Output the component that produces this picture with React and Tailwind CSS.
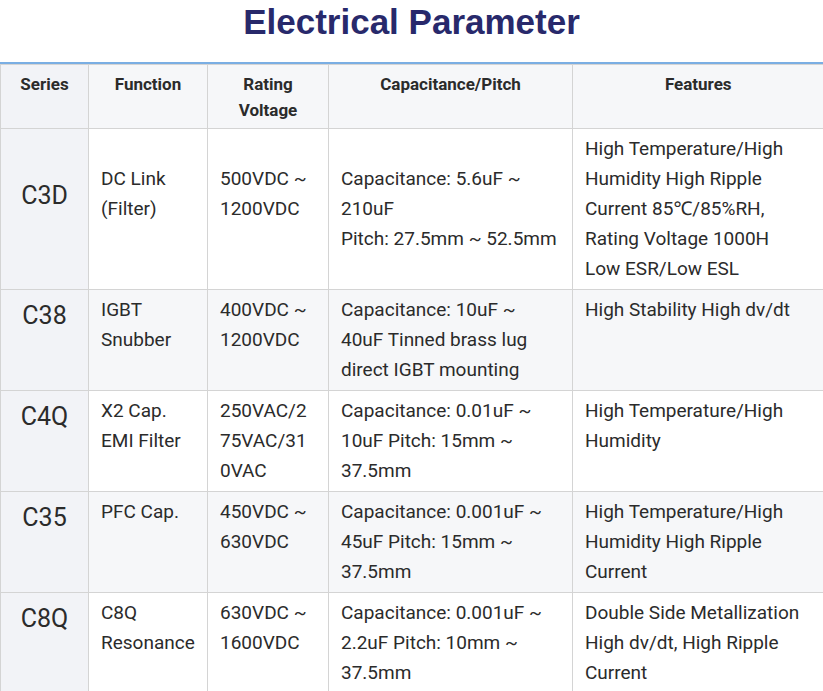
import React from 'react';

const rows = [
    {
        series: 'C3D',
        fn: ['DC Link', '(Filter)'],
        voltage: ['500VDC ~', '1200VDC'],
        cap: ['Capacitance: 5.6uF ~', '210uF', 'Pitch: 27.5mm ~ 52.5mm'],
        features: ['High Temperature/High', 'Humidity High Ripple', 'Current 85℃/85%RH,', 'Rating Voltage 1000H', 'Low ESR/Low ESL'],
        shift: true,
    },
    {
        series: 'C38',
        fn: ['IGBT', 'Snubber'],
        voltage: ['400VDC ~', '1200VDC'],
        cap: ['Capacitance: 10uF ~', '40uF Tinned brass lug', 'direct IGBT mounting'],
        features: ['High Stability High dv/dt'],
    },
    {
        series: 'C4Q',
        fn: ['X2 Cap.', 'EMI Filter'],
        voltage: ['250VAC/2', '75VAC/31', '0VAC'],
        cap: ['Capacitance: 0.01uF ~', '10uF Pitch: 15mm ~', '37.5mm'],
        features: ['High Temperature/High', 'Humidity'],
    },
    {
        series: 'C35',
        fn: ['PFC Cap.'],
        voltage: ['450VDC ~', '630VDC'],
        cap: ['Capacitance: 0.001uF ~', '45uF Pitch: 15mm ~', '37.5mm'],
        features: ['High Temperature/High', 'Humidity High Ripple', 'Current'],
    },
    {
        series: 'C8Q',
        fn: ['C8Q', 'Resonance'],
        voltage: ['630VDC ~', '1600VDC'],
        cap: ['Capacitance: 0.001uF ~', '2.2uF Pitch: 10mm ~', '37.5mm'],
        features: ['Double Side Metallization', 'High dv/dt, High Ripple', 'Current'],
    },
];

const Lines = ({ lines }) => (
    <>
        {lines.map((l, i) => (
            <div key={i} className="whitespace-nowrap">{l}</div>
        ))}
    </>
);

export default function App() {
    return (
        <div className="w-[823px] h-[691px] overflow-hidden bg-white text-[#2b2b2b]" style={{ fontFamily: 'Roboto, "Noto Sans", sans-serif' }}>
            <h1
                className="text-center text-[35px] font-bold leading-[40px] pt-[2px] text-[#28296b]"
                style={{ fontFamily: '"Liberation Sans", Arial, sans-serif' }}
            >
                Electrical Parameter
            </h1>
            <div className="mt-[20px] border-t-2 border-[#7aaee3]">
                <table className="border-collapse table-fixed w-[823px]">
                    <colgroup>
                        <col className="w-[88px]" />
                        <col className="w-[119px]" />
                        <col className="w-[121px]" />
                        <col className="w-[244px]" />
                        <col className="w-[251px]" />
                    </colgroup>
                    <thead>
                        <tr className="bg-[#f6f7f9] h-[64px] text-[17px] font-bold leading-[26px] text-[#2b2b2b]">
                            <th className="border border-[#d4d4d4] bg-[#f2f3f7] align-top pt-[6px] font-bold">Series</th>
                            <th className="border border-[#d4d4d4] align-top pt-[6px] font-bold">Function</th>
                            <th className="border border-[#d4d4d4] align-top pt-[6px] font-bold">Rating<br />Voltage</th>
                            <th className="border border-[#d4d4d4] align-top pt-[6px] font-bold">Capacitance/Pitch</th>
                            <th className="border border-[#d4d4d4] border-r-0 align-top pt-[6px] font-bold">Features</th>
                        </tr>
                    </thead>
                    <tbody className="text-[19px] leading-[30px]">
                        {rows.map((r, i) => (
                            <tr key={r.series} className={i % 2 === 1 ? 'bg-[#f6f7f9]' : 'bg-white'}>
                                <td className={`border border-[#d4d4d4] bg-[#f2f3f7] align-top text-center text-[25px] ${r.shift ? 'pt-[52px]' : 'pt-[11px]'}`}>
                                    {r.series}
                                </td>
                                <td className={`border border-[#d4d4d4] align-top pl-[12px] pb-[5px] ${r.shift ? 'pt-[35px]' : 'pt-[5px]'}`}>
                                    <Lines lines={r.fn} />
                                </td>
                                <td className={`border border-[#d4d4d4] align-top pl-[12px] pb-[5px] ${r.shift ? 'pt-[35px]' : 'pt-[5px]'}`}>
                                    <Lines lines={r.voltage} />
                                </td>
                                <td className={`border border-[#d4d4d4] align-top pl-[12px] pb-[5px] ${r.shift ? 'pt-[35px]' : 'pt-[5px]'}`}>
                                    <Lines lines={r.cap} />
                                </td>
                                <td className="border border-[#d4d4d4] border-r-0 align-top pl-[12px] pt-[5px] pb-[5px]">
                                    <Lines lines={r.features} />
                                </td>
                            </tr>
                        ))}
                    </tbody>
                </table>
            </div>
        </div>
    );
}
